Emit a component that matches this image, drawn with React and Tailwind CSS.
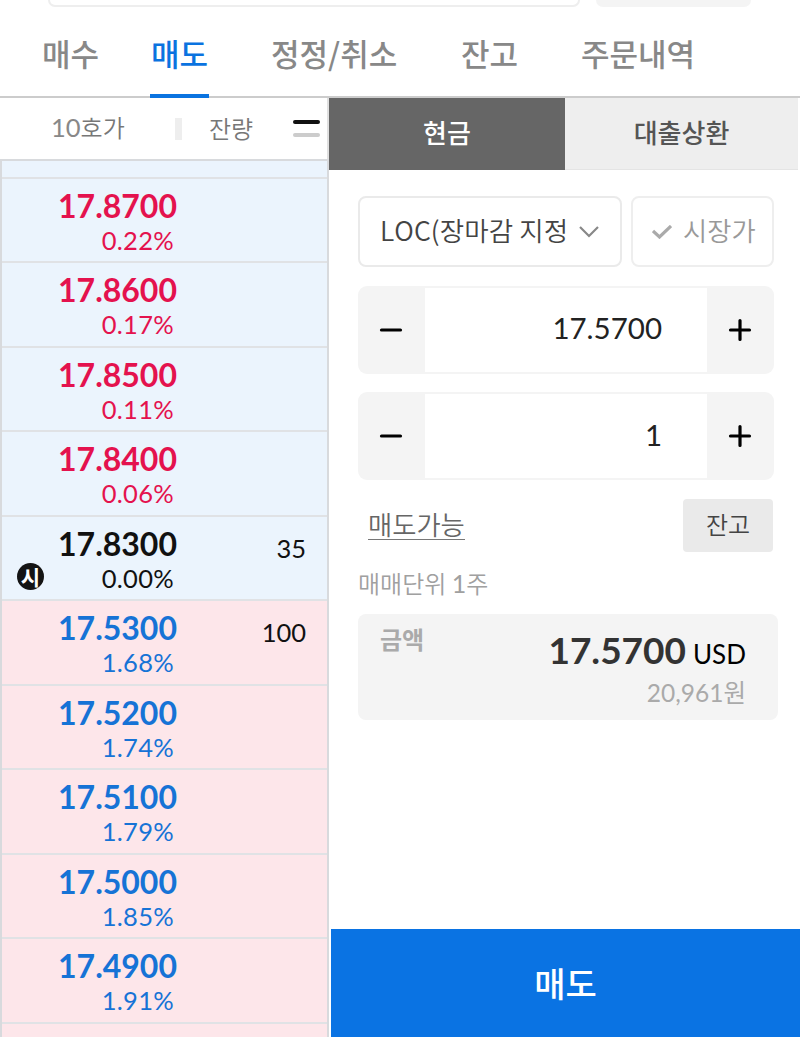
import React from "react";

const tabs = [
  { label: "매수", pad: "pl-[42px] w-[150px]" },
  { label: "매도", pad: "w-[59px] pl-px", active: true },
  { label: "정정/취소", pad: "pl-[62px] w-[252px]" },
  { label: "잔고", pad: "w-[120px]" },
  { label: "주문내역", pad: "w-[120px]" },
];

const quotes = [
  { price: "17.8700", pct: "0.22%", tone: "up", side: "ask" },
  { price: "17.8600", pct: "0.17%", tone: "up", side: "ask" },
  { price: "17.8500", pct: "0.11%", tone: "up", side: "ask" },
  { price: "17.8400", pct: "0.06%", tone: "up", side: "ask" },
  { price: "17.8300", pct: "0.00%", tone: "flat", side: "ask", qty: "35", mark: "시" },
  { price: "17.5300", pct: "1.68%", tone: "down", side: "bid", qty: "100" },
  { price: "17.5200", pct: "1.74%", tone: "down", side: "bid" },
  { price: "17.5100", pct: "1.79%", tone: "down", side: "bid" },
  { price: "17.5000", pct: "1.85%", tone: "down", side: "bid" },
  { price: "17.4900", pct: "1.91%", tone: "down", side: "bid" },
];

const tones = { up: "text-[#e4124e]", flat: "text-[#111111]", down: "text-[#1673d6]" };
const sides = { ask: "bg-[#ebf4fd]", bid: "bg-[#fde6ea]" };

function QuoteRow({ q }) {
  return (
    <div className={`flex h-[84.5px] shrink-0 border-b-2 border-[#e0e2e5] ${sides[q.side]}`}>
      <div className="flex w-[42px] items-end pb-[9px] pl-[15px]">
        {q.mark && (
          <span className="flex size-[27px] shrink-0 items-center justify-center rounded-full bg-[#141414] text-[21px] leading-[27px] font-bold text-white">
            {q.mark}
          </span>
        )}
      </div>
      <div className={`flex w-[133px] flex-col items-end pt-[7px] ${tones[q.tone]}`}>
        <span className="text-[32px] leading-[40px] font-bold">{q.price}</span>
        <span className="pr-[3px] text-[25.5px] leading-[29px] tracking-[0.3px]">{q.pct}</span>
      </div>
      <div className="flex-1 pt-[15px] pr-[21px] text-right text-[25.5px] leading-[32px] text-[#111111]">{q.qty}</div>
    </div>
  );
}

function Stepper({ value }) {
  return (
    <div className="flex h-[88px] w-[416px] rounded-[9px] bg-[#f4f4f4] py-[2px]">
      <button className="flex w-[67px] items-center justify-center pr-[2px]">
        <svg width="24" height="24" viewBox="0 0 24 24" stroke="#000" strokeWidth="3.2" strokeLinecap="round">
          <path d="M2.5 12H21.5" />
        </svg>
      </button>
      <div className="flex w-[282px] items-center justify-end bg-white pr-[45px] pb-[2px] text-[29.5px] text-[#222222]">
        {value}
      </div>
      <button className="flex w-[67px] items-center justify-center pr-[2px]">
        <svg width="24" height="24" viewBox="0 0 24 24" stroke="#000" strokeWidth="3.2" strokeLinecap="round">
          <path d="M2.5 12H21.5M12 2.5V21.5" />
        </svg>
      </button>
    </div>
  );
}

export default function App() {
  return (
    <div className="flex h-[1037px] w-[800px] flex-col overflow-hidden bg-white font-['Lato','Noto_Sans_CJK_KR',sans-serif] whitespace-nowrap [font-kerning:none]">
      <div className="flex h-[7px] shrink-0 gap-[16px] pl-[48px]">
        <div className="w-[532px] rounded-b-[9px] border-2 border-t-0 border-[#eeeeee]" />
        <div className="w-[155px] rounded-b-[9px] bg-[#f4f4f4]" />
      </div>

      <nav className="flex h-[91px] shrink-0 border-b-2 border-[#cccccc] font-['Noto_Sans_CJK_KR',sans-serif]">
        {tabs.map((t) => (
          <div key={t.label} className={`h-[91px] shrink-0 ${t.pad} ${t.active ? "border-b-4 border-[#0a73e0] text-[#0a73e0]" : "text-[#888888]"}`}>
            <span className="block pt-[24px] text-[31px] leading-[44px] font-medium">{t.label}</span>
          </div>
        ))}
      </nav>

      <main className="flex min-h-0 flex-1">
        <section className="flex w-[329px] shrink-0 flex-col">
          <div className="flex h-[61px] shrink-0 items-center border-r-2 border-[#e0e0e0] pl-[51px] font-['Noto_Sans_CJK_KR',sans-serif] text-[24px] font-[350] text-[#777777]">
            <span className="w-[124px] pb-[2px]">
              <span className="font-['Lato'] text-[25.5px] font-normal text-[#888888]">10</span>호가
            </span>
            <span className="h-[22px] w-[7px] bg-[#eeeeee]" />
            <span className="w-[111px] pb-[2px] pl-[27px]">잔량</span>
            <span className="flex flex-col gap-[9px]">
              <span className="h-[4px] w-[27px] rounded-full bg-[#111111]" />
              <span className="h-[4px] w-[27px] rounded-full bg-[#cccccc]" />
            </span>
          </div>
          <div className="flex min-h-0 flex-1 flex-col overflow-hidden border-t-2 border-r-2 border-l-2 border-[#d8dadd]">
            <div className="h-[17.5px] shrink-0 border-b-2 border-[#e0e2e5] bg-[#ebf4fd]" />
            {quotes.map((q) => (
              <QuoteRow key={q.price} q={q} />
            ))}
            <div className="flex-1 bg-[#fde6ea]" />
          </div>
        </section>

        <section className="flex flex-1 flex-col">
          <div className="flex h-[72px] shrink-0 pr-[2px] text-[26px] font-medium">
            <div className="flex w-[236px] items-center justify-center bg-[#666666] pb-[2px] text-white">현금</div>
            <div className="flex flex-1 items-center justify-center border-b border-[#e4e4e4] bg-[#eeeeee] text-[#555555]">대출상환</div>
          </div>

          <div className="flex flex-1 flex-col pt-[26px] pl-[29px]">
            <div className="flex h-[71px] gap-[9px] font-['Noto_Sans_CJK_KR',sans-serif] font-[350]">
              <div className="flex w-[264px] items-center rounded-[8px] border-2 border-[#eaeaea] pl-[20px] text-[26.5px] text-[#444444]">
                <span className="w-[199px] pb-[4px] tracking-[0.1px]">LOC(장마감 지정</span>
                <svg width="20" height="12" viewBox="0 0 20 12" fill="none" stroke="#888" strokeWidth="2.2">
                  <path d="M1 1L10 10L19 1" />
                </svg>
              </div>
              <div className="flex w-[143px] items-center rounded-[8px] border-2 border-[#eeeeee] pl-[19px] text-[26.3px] text-[#999999]">
                <svg width="20" height="14" viewBox="0 0 20 14" fill="none" stroke="#aaa" strokeWidth="3.2">
                  <path d="M1 6L7.5 12L19 1" />
                </svg>
                <span className="pb-[4px] pl-[11px]">시장가</span>
              </div>
            </div>

            <div className="mt-[18.5px] flex flex-col gap-[18.5px]">
              <Stepper value="17.5700" />
              <Stepper value="1" />
            </div>

            <div className="mt-[19px] flex h-[53px] w-[415px] justify-between pl-[10px] font-['Noto_Sans_CJK_KR',sans-serif] font-[350]">
              <span className="mt-[9px] h-[32px] border-b border-[#777777] text-[26.3px] leading-[31px] text-[#666666]">매도가능</span>
              <span className="flex w-[90px] items-center justify-center rounded-[4px] bg-[#eaeaea] pb-[4px] text-[24px] text-[#444444]">잔고</span>
            </div>

            <div className="mt-[13px] h-[36px] font-['Noto_Sans_CJK_KR',sans-serif] text-[24px] leading-[36px] font-[350] text-[#a0a0a0]">
              매매단위 <span className="font-['Lato'] text-[25px] font-normal">1</span>주
            </div>

            <div className="mt-[13px] flex h-[106px] w-[420px] justify-between rounded-[8px] bg-[#f4f4f4] pr-[32px] pl-[22px]">
              <span className="pt-[8px] text-[24px] leading-[36px] font-bold text-[#aaaaaa]">금액</span>
              <div className="flex flex-col items-end pt-[12px]">
                <div className="flex items-baseline gap-[7px] leading-[48px]">
                  <span className="text-[37px] font-bold text-[#333333]">17.5700</span>
                  <span className="text-[26px] text-black">USD</span>
                </div>
                <span className="-mt-[3px] text-[24.5px] leading-[36px] text-[#aaaaaa]">20,961원</span>
              </div>
            </div>
          </div>

          <button className="ml-[2px] h-[108px] shrink-0 bg-[#0a73e3] text-[34px] font-medium text-white">매도</button>
        </section>
      </main>
    </div>
  );
}
